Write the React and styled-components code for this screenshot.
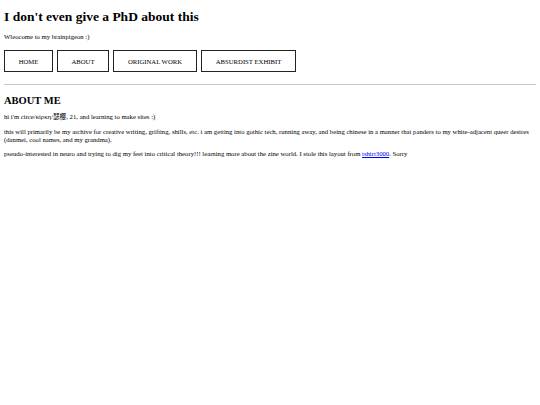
import React from "react";
import styled, { createGlobalStyle } from "styled-components";

const GlobalStyle = createGlobalStyle`
  body {
    margin: 4px;
    background: #fff;
    color: #000;
    font-family: "Liberation Serif", "Noto Sans CJK SC", serif;
  }
`;

const Title = styled.h1`
  font-size: 13.5px;
  font-weight: 700;
  margin: 5px 0 0;
`;

const Welcome = styled.p`
  font-size: 6.7px;
  margin: 8px 0 0;
`;

const Nav = styled.nav`
  display: flex;
  gap: 4px;
  margin-top: 10px;
`;

const NavButton = styled.a`
  display: flex;
  align-items: center;
  justify-content: center;
  height: 22px;
  width: ${p => p.$w}px;
  box-sizing: border-box;
  border: 1.5px solid #222;
  font-size: 6.7px;
  color: #000;
  text-decoration: none;
`;

const Rule = styled.hr`
  border: none;
  border-top: 1px solid #c8c8c8;
  margin: 12px 0 0;
`;

const Heading = styled.h2`
  font-size: 10.5px;
  font-weight: 700;
  margin: 10px 0 0;
`;

const Para = styled.p`
  font-size: 6.7px;
  line-height: 8px;
  margin: 7px 0 0;
`;

const LastPara = styled(Para)`
  margin-top: 6px;
`;

const Link = styled.a`
  color: #0000ee;
`;

export default function App() {
  return (
    <>
      <GlobalStyle />
      <Title>I don't even give a PhD about this</Title>
      <Welcome>Wleocome to my brainpigeon :)</Welcome>
      <Nav>
        <NavButton $w={49}>HOME</NavButton>
        <NavButton $w={52}>ABOUT</NavButton>
        <NavButton $w={84}>ORIGINAL WORK</NavButton>
        <NavButton $w={95}>ABSURDIST EXHIBIT</NavButton>
      </Nav>
      <Rule />
      <Heading>ABOUT ME</Heading>
      <Para>hi i'm circe/κίρκη/瑟樱, 21, and learning to make sites :)</Para>
      <Para>
        this will primarily be my archive for creative writing, grifting, shills, etc. i am getting into gothic tech,
        running away, and being chinese in a manner that panders to my white-adjacent queer desires (danmei, cool names,
        and my grandma).
      </Para>
      <LastPara>
        pseudo-interested in neuro and trying to dig my feet into critical theory!!! learning more about the zine world.
        I stole this layout from <Link href="#">tshirt3000</Link>. Sorry
      </LastPara>
    </>
  );
}
